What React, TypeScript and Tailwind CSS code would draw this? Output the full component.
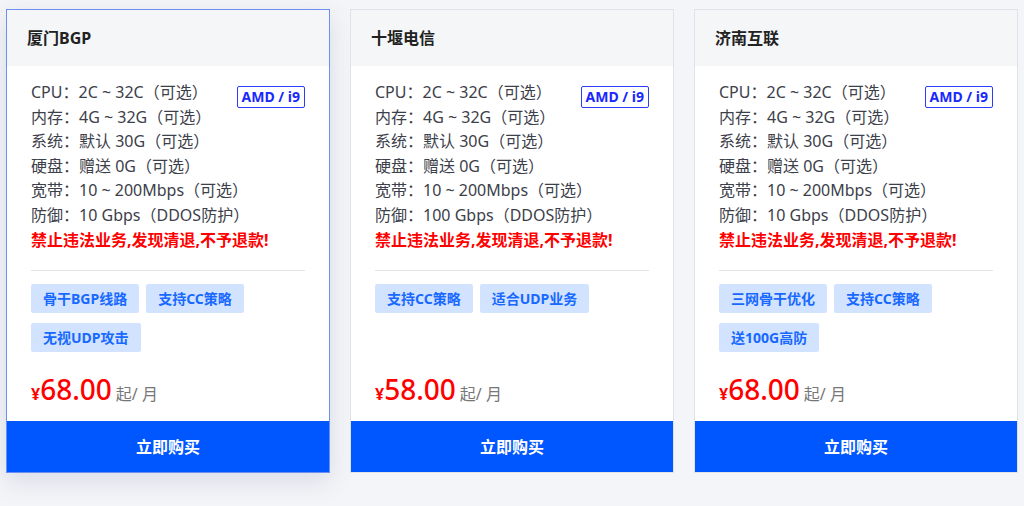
const plans = [
  {
    name: "厦门BGP",
    ddos: "10 Gbps",
    tags: ["骨干BGP线路", "支持CC策略", "无视UDP攻击"],
    price: "68.00",
    active: true,
  },
  {
    name: "十堰电信",
    ddos: "100 Gbps",
    tags: ["支持CC策略", "适合UDP业务"],
    price: "58.00",
    active: false,
  },
  {
    name: "济南互联",
    ddos: "10 Gbps",
    tags: ["三网骨干优化", "支持CC策略", "送100G高防"],
    price: "68.00",
    active: false,
  },
];

const Card = ({ plan }: { plan: (typeof plans)[number] }) => {
  const specs = [
    ["CPU", "2C ~ 32C（可选）"],
    ["内存", "4G ~ 32G（可选）"],
    ["系统", "默认 30G（可选）"],
    ["硬盘", "赠送 0G（可选）"],
    ["宽带", "10 ~ 200Mbps（可选）"],
    ["防御", `${plan.ddos}（DDOS防护）`],
  ];

  return (
    <div
      className={
        plan.active
          ? "w-[324px] h-[464px] flex flex-col bg-white border border-[#6d8ff2] shadow-[0_8px_24px_rgba(60,80,140,0.15)]"
          : "w-[324px] h-[464px] flex flex-col bg-white border border-[#e0e2e8]"
      }>
      <div className="h-[56px] shrink-0 flex items-center px-5 bg-[#f5f6f8] text-[16px] font-bold text-[#222]">
        {plan.name}
      </div>
      <div className="flex-1 flex flex-col px-6 pt-[14px]">
        <div className="relative">
          {specs.map(([k, v]) => (
            <div key={k} className="h-[24.5px] leading-[24.5px] text-[16px] text-[#3c404a]">
              {k}：{v}
            </div>
          ))}
          <div className="absolute right-0 top-[6px] h-[22px] px-[4px] flex items-center border border-[#2b3cff] rounded-[2px] text-[14px] font-bold text-[#1a28ff] leading-none">
            AMD / i9
          </div>
        </div>
        <div className="mt-[1px] leading-[24px] text-[16px] font-bold text-[#ff0000]">
          禁止违法业务,发现清退,不予退款!
        </div>
        <div className="mt-[18px] h-px bg-[#e3e4e8]" />
        <div className="mt-[13px] flex flex-wrap gap-x-[7px] gap-y-[10px]">
          {plan.tags.map((t) => (
            <span
              key={t}
              className="h-[29px] px-3 flex items-center rounded-[2px] bg-[#d2e3ff] text-[14px] font-bold text-[#1769ff]">
              {t}
            </span>
          ))}
        </div>
        <div className="mt-auto mb-[15px] flex items-baseline">
          <span className="text-[16px] font-bold text-[#ff0000]">¥</span>
          <span className="text-[28px] font-medium text-[#ff0000] leading-[34px] mr-1">{plan.price}</span>
          <span className="text-[16px] text-[#777]">起/ 月</span>
        </div>
      </div>
      <button className="h-[51px] shrink-0 bg-[#0057ff] text-white text-[16px] font-bold">立即购买</button>
    </div>
  );
};

const App = () => {
  return (
    <div
      className="w-[1024px] h-[506px] bg-[#f4f5f8] pl-[6px] pt-[9px] flex gap-[20px]"
      style={{ fontFamily: '"Noto Sans", "Noto Sans CJK SC", sans-serif' }}>
      {plans.map((p) => (
        <Card key={p.name} plan={p} />
      ))}
    </div>
  );
};

export default App;
